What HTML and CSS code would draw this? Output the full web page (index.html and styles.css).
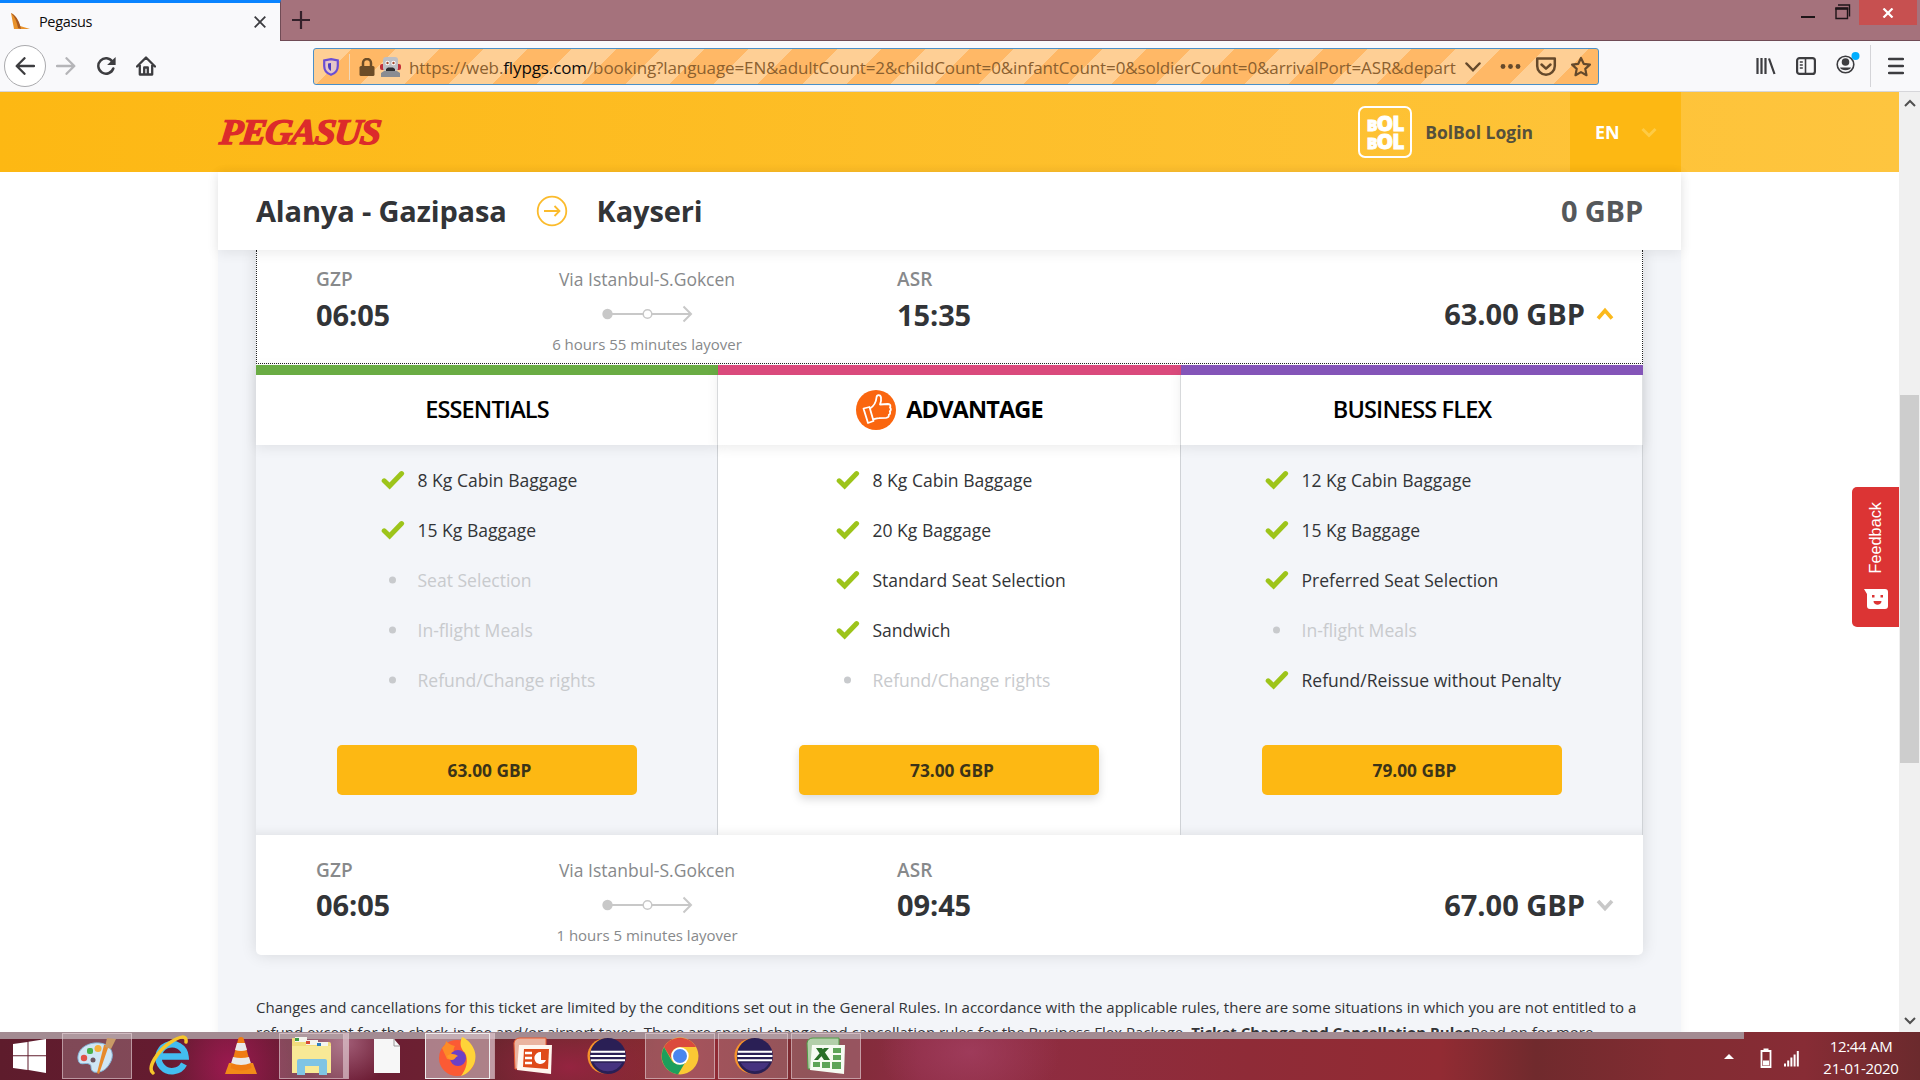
FILE: index.html
```html
<!DOCTYPE html>
<html lang="en">
<head>
<meta charset="utf-8">
<title>Pegasus</title>
<link rel="stylesheet" href="styles.css">
</head>
<body>
<svg class="defs" width="0" height="0">
  <defs>
    <symbol id="check" viewBox="0 0 24 20"><path d="M3.2 10.800 8.600 16 20.600 3.600" fill="none" stroke="#9dc41a" stroke-width="5" stroke-linecap="round" stroke-linejoin="miter"/></symbol>
    <symbol id="dot" viewBox="0 0 24 20"><circle cx="11.500" cy="10" r="3.500" fill="#c8cacd"/></symbol>
    <symbol id="route" viewBox="0 0 92 18"><path d="M5 9H89M81.500 1.500 89 9l-7.500 7.500" fill="none" stroke="#c8c8c8" stroke-width="2"/><circle cx="5.500" cy="9" r="5.200" fill="#c8c8c8"/><circle cx="45.500" cy="9" r="4.300" fill="#fff" stroke="#c8c8c8" stroke-width="1.500"/></symbol>
    <symbol id="eclipse" viewBox="0 0 42 40"><circle cx="20" cy="20" r="18.500" fill="#f7932a"/><circle cx="23" cy="20" r="19" fill="#2a1f55"/><path d="M8 27a17 17 0 0 0 30 0z" fill="#46337f"/><path d="M5 15.500h36M4.500 20h37M5 24.500h36" stroke="#fff" stroke-width="2.200"/></symbol>
  </defs>
</svg>
<div class="tabbar">
  <div class="tab">
    <svg class="favicon" width="20" height="18" viewBox="0 0 20 18"><path d="M0 0c5 2 7 8 9 13l10 3H3z" fill="#e8922b"/><path d="M0 0c4 4 6 9 7 15l3 1C9 10 6 3 0 0z" fill="#a95a20"/></svg>
    <span class="tab-title">Pegasus</span>
    <svg class="tab-close" width="12" height="12" viewBox="0 0 12 12"><path d="M.7.7l10.600 10.600M11.300.7.7 11.300" stroke="#3c3c40" stroke-width="1.800"/></svg>
  </div>
  <svg class="plus" width="18" height="18" viewBox="0 0 18 18"><path d="M9 0v18M0 9h18" stroke="#33202a" stroke-width="2.200"/></svg>
  <div class="win">
    <svg width="58" height="25" viewBox="0 0 58 25"><path d="M0 17h14" stroke="#1e1518" stroke-width="2"/><path d="M37 5h11.500v11.500M35 8.500h11.500v10H35z" fill="none" stroke="#1e1518" stroke-width="1.400"/><path d="M34.300 8.500h13" stroke="#1e1518" stroke-width="2.500"/></svg>
    <div class="win-close"><svg width="12" height="10" viewBox="0 0 12 10"><path d="M1.500.5l9 9M10.500.5l-9 9" stroke="#fff" stroke-width="2.200"/></svg></div>
  </div>
</div>
<div class="toolbar">
  <div class="nav">
    <div class="back"><svg width="20" height="18" viewBox="0 0 20 18"><path d="M19 9H2M9.500 1.200 1.700 9l7.800 7.800" fill="none" stroke="#3d3d40" stroke-width="2.300" stroke-linecap="round" stroke-linejoin="round"/></svg></div>
    <svg width="20" height="18" viewBox="0 0 20 18"><path d="M1 9h17M10.500 1.200 18.300 9l-7.800 7.800" fill="none" stroke="#b5b5b8" stroke-width="2.300" stroke-linecap="round" stroke-linejoin="round"/></svg>
    <svg width="20" height="18" viewBox="0 0 20 18"><path d="M17.300 11.500A7.700 7.700 0 1 1 16.500 4.800" fill="none" stroke="#3d3d40" stroke-width="2.500" stroke-linecap="round"/><path d="M19.600 0v8h-8.500z" fill="#3d3d40"/></svg>
    <svg width="20" height="20" viewBox="0 0 20 20"><path d="M1 10.500 10 1.500l9 9M3.800 9v9.500h12.400V9M8.200 18v-6.500h3.600V18" fill="none" stroke="#3d3d40" stroke-width="2.300" stroke-linecap="round" stroke-linejoin="round"/></svg>
  </div>
  <div class="urlbar">
    <svg class="shield" width="16" height="18" viewBox="0 0 16 18"><path d="M8 1.200 14.800 2.500V8c0 4.500-3 7.500-6.800 8.800C4.200 15.500 1.200 12.500 1.200 8V2.500z" fill="#e5c6c9" stroke="#6a4ed4" stroke-width="2.200"/><path d="M8 5v8c-2-1-3-3-3-5V5.500z" fill="#4b3fc0"/></svg>
    <span class="sep"></span>
    <svg class="lock" width="16" height="18" viewBox="0 0 16 18"><rect x=".5" y="8" width="15" height="10" rx="1.500" fill="#6c4c27"/><path d="M4 9V5a4 4 0 0 1 8 0v4" fill="none" stroke="#6c4c27" stroke-width="2.500"/></svg>
    <svg class="robot" width="21" height="20" viewBox="0 0 21 20"><rect x="0" y="7" width="21" height="6" rx="2" fill="#c2303a"/><rect x="3" y="0" width="15" height="14" rx="3" fill="#bdbfc4"/><path d="M1 20v-4l3-2h13l3 2v4z" fill="#8a8c92"/><circle cx="7.500" cy="6" r="2.200" fill="#fff"/><circle cx="13.500" cy="6" r="2.200" fill="#fff"/><circle cx="7.500" cy="6" r="1.200" fill="#a3472c"/><circle cx="13.500" cy="6" r="1.200" fill="#a3472c"/><path d="M6 14v-2l2-1.500h5l2 1.500v2z" fill="#2c2c30"/></svg>
    <span class="url">https://web.<b>flypgs.com</b>/booking?language=EN&amp;adultCount=2&amp;childCount=0&amp;infantCount=0&amp;soldierCount=0&amp;arrivalPort=ASR&amp;depart</span>
    <svg class="urlicons" width="126" height="22" viewBox="0 0 126 22"><g fill="none" stroke="#65492b" stroke-width="2.500"><path d="M1.500 7.500 8 14.300 14.500 7.500" stroke-linecap="round"/><path d="M72.200 2.500h17.600v7.500a8.800 8.800 0 0 1-17.600 0zM76.500 8.500l4.500 4.200 4.500-4.200" stroke-linejoin="round" stroke-linecap="round"/><path d="M116 2l2.700 5.800 6.200.8-4.600 4.300 1.200 6.300-5.500-3.100-5.500 3.100 1.200-6.300-4.600-4.300 6.200-.8z" stroke-width="2.200" stroke-linejoin="round"/></g><g fill="#65492b"><circle cx="38" cy="10.500" r="2.400"/><circle cx="45.500" cy="10.500" r="2.400"/><circle cx="53" cy="10.500" r="2.400"/></g></svg>
  </div>
  <div class="tools">
    <svg width="20" height="18" viewBox="0 0 20 18"><path d="M1.500 1v16M5.500 1v16M9.500 1v16M13 1.500l5.500 15.500" stroke="#3d3d40" stroke-width="2.200"/></svg>
    <svg width="20" height="18" viewBox="0 0 20 18"><rect x="1.100" y="1.100" width="17.800" height="15.800" rx="2.500" fill="none" stroke="#3d3d40" stroke-width="2.200"/><path d="M9.500 1v16M3.800 5h3M3.800 8h3M3.800 11h3" stroke="#3d3d40" stroke-width="1.600"/></svg>
    <svg width="24" height="24" viewBox="0 0 24 24"><circle cx="9.500" cy="13.500" r="8.300" fill="none" stroke="#3d3d40" stroke-width="1.600"/><circle cx="9.500" cy="11" r="3.800" fill="#3d3d40"/><path d="M4 16.500h11c-1 3.500-10 3.500-11 0z" fill="#3d3d40"/><circle cx="19.500" cy="5" r="4" fill="#00aeff"/></svg>
    <span class="tsep"></span>
    <svg width="16" height="18" viewBox="0 0 16 18"><path d="M1 2h14M1 9h14M1 16h14" stroke="#3d3d40" stroke-width="2.300" stroke-linecap="round"/></svg>
  </div>
</div>
<div class="viewport">
  <div class="site">
    <header class="header">
      <div class="logo">PEGASUS</div>
      <div class="login">
        <div class="bolbol"><span><i>B</i>OL</span><span><i>B</i>OL</span></div>
        <span class="login-text">BolBol Login</span>
      </div>
      <div class="lang">EN<svg width="16" height="11" viewBox="0 0 16 11"><path d="M1.500 2 8 8.500 14.500 2" fill="none" stroke="#fecb45" stroke-width="3"/></svg></div>
    </header>
    <main class="panel">
      <div class="route-bar">
        <span>Alanya - Gazipasa</span>
        <svg width="32" height="32" viewBox="0 0 32 32"><circle cx="16" cy="16" r="14.300" fill="none" stroke="#fbbb2c" stroke-width="1.800"/><path d="M8 16h15M18.500 11l5 5-5 5" fill="none" stroke="#fbbb2c" stroke-width="1.800"/></svg>
        <span>Kayseri</span>
        <span class="total">0 GBP</span>
      </div>
      <div class="list">
        <div class="flight focused">
          <div class="point"><small>GZP</small><strong>06:05</strong></div>
          <div class="via"><span>Via Istanbul-S.Gokcen</span><svg width="92" height="18"><use href="#route"/></svg><small>6 hours 55 minutes layover</small></div>
          <div class="point arrive"><small>ASR</small><strong>15:35</strong></div>
          <div class="price">63.00 GBP<svg width="18" height="14" viewBox="0 0 18 14"><path d="M2 11.500 9 3.500l7 8" fill="none" stroke="#fbb91c" stroke-width="3.600"/></svg></div>
        </div>
        <div class="fares">
          <section class="fare essentials">
            <h2>ESSENTIALS</h2>
            <div class="fare-body">
              <ul>
                <li><svg><use href="#check"/></svg>8 Kg Cabin Baggage</li>
                <li><svg><use href="#check"/></svg>15 Kg Baggage</li>
                <li class="off"><svg><use href="#dot"/></svg>Seat Selection</li>
                <li class="off"><svg><use href="#dot"/></svg>In-flight Meals</li>
                <li class="off"><svg><use href="#dot"/></svg>Refund/Change rights</li>
              </ul>
              <div class="buy">63.00 GBP</div>
            </div>
          </section>
          <section class="fare advantage">
            <h2><svg width="40" height="40" viewBox="0 0 40 40"><circle cx="20" cy="20" r="20" fill="#fa660f"/><g fill="none" stroke="#fff" stroke-width="1.800" stroke-linejoin="round"><path d="M7.500 18.500l6-1.500 4 14-5.500 2z"/><path d="M14 18.500c4-2.500 6-5.500 6.500-11 .2-3 4-3.200 4.500 0 .5 3-.3 5-1 7l8-.5c2.500 0 2.800 2 2 3.500 1.300 1.200 1 3-.2 3.800.8 1.500.2 3-1 3.600.3 1.600-.6 2.800-2.800 3l-7 .3c-2.500 0-3.500.5-6 1"/></g></svg><span>ADVANTAGE</span></h2>
            <div class="fare-body">
              <ul>
                <li><svg><use href="#check"/></svg>8 Kg Cabin Baggage</li>
                <li><svg><use href="#check"/></svg>20 Kg Baggage</li>
                <li><svg><use href="#check"/></svg>Standard Seat Selection</li>
                <li><svg><use href="#check"/></svg>Sandwich</li>
                <li class="off"><svg><use href="#dot"/></svg>Refund/Change rights</li>
              </ul>
              <div class="buy">73.00 GBP</div>
            </div>
          </section>
          <section class="fare business">
            <h2>BUSINESS FLEX</h2>
            <div class="fare-body">
              <ul>
                <li><svg><use href="#check"/></svg>12 Kg Cabin Baggage</li>
                <li><svg><use href="#check"/></svg>15 Kg Baggage</li>
                <li><svg><use href="#check"/></svg>Preferred Seat Selection</li>
                <li class="off"><svg><use href="#dot"/></svg>In-flight Meals</li>
                <li><svg><use href="#check"/></svg>Refund/Reissue without Penalty</li>
              </ul>
              <div class="buy">79.00 GBP</div>
            </div>
          </section>
        </div>
        <div class="flight second">
          <div class="point"><small>GZP</small><strong>06:05</strong></div>
          <div class="via"><span>Via Istanbul-S.Gokcen</span><svg width="92" height="18"><use href="#route"/></svg><small>1 hours 5 minutes layover</small></div>
          <div class="point arrive"><small>ASR</small><strong>09:45</strong></div>
          <div class="price">67.00 GBP<svg width="18" height="14" viewBox="0 0 18 14"><path d="M2 3l7 7.500L16 3" fill="none" stroke="#c8c8c8" stroke-width="3.600"/></svg></div>
        </div>
      </div>
      <p class="rules"><span>Changes and cancellations for this ticket are limited by the conditions set out in the General Rules. In accordance with the applicable rules, there are some situations in which you are not entitled to a</span><span>refund except for the check-in fee and/or airport taxes. There are special change and cancellation rules for the Business Flex Package. <b>Ticket Change and Cancellation Rules</b>Read on for more</span></p>
    </main>
    <div class="feedback"><span>Feedback</span><svg width="24" height="20" viewBox="0 0 24 20"><path d="M0 0h21a3 3 0 0 1 3 3v14a3 3 0 0 1-3 3H6a3 3 0 0 1-3-3V5z" fill="#fff"/><path d="M8 6h2.500v2.500H8zM16.500 6H19v2.500h-2.500zM9.500 12h8c0 5-8 5-8 0z" fill="#dc3434"/></svg></div>
  </div>
  <div class="scrollbar">
    <svg width="12" height="8" viewBox="0 0 12 8"><path d="M1 7l5-5 5 5" fill="none" stroke="#505050" stroke-width="2"/></svg>
    <div class="thumb"></div>
    <svg width="12" height="8" viewBox="0 0 12 8"><path d="M1 1l5 5 5-5" fill="none" stroke="#505050" stroke-width="2"/></svg>
  </div>
</div>
<footer class="taskbar">
  <div class="task start"><svg width="33" height="34" viewBox="0 0 33 34"><path d="M0 5 14.500 3v13.300H0zM15.500 2.800 33 0v16.300H15.500zM0 17.300h14.500V31L0 29zM15.500 17.300H33V34l-17.500-3z" fill="#fff"/></svg></div>
  <div class="task open"><svg width="42" height="40" viewBox="0 0 42 40"><path d="M2 23C1 12 13 6 23 7c13 1 16 12 11 20-4 8-11 10-16 9-5-2-1-7-5-8-4-2-10 3-11-5z" fill="#cfe6f5" stroke="#87b9dc"/><circle cx="8" cy="22" r="3.200" fill="#e0524b"/><rect x="11" y="12" width="6" height="6" rx="2" fill="#47b04c"/><circle cx="22" cy="12.500" r="3.500" fill="#f6b03c"/><circle cx="17" cy="24" r="2.500" fill="#6c5560"/><path d="M33 9 23 38l-2-1 7-28z" fill="#e78a2c"/><path d="M31 2l9 1-5 10-6-2z" fill="#c99a66"/></svg></div>
  <div class="task ie"><svg width="42" height="42" viewBox="0 0 42 42"><path d="M36 29a13.500 13.500 0 1 1 1.500-7.500H13" fill="none" stroke="#43bdf0" stroke-width="6.500"/><path d="M5 38C-1 33 9 16 23 7 32 1 39 0 38 7" fill="none" stroke="#f6c62b" stroke-width="3.500" stroke-linecap="round"/></svg></div>
  <div class="task"><svg width="34" height="40" viewBox="0 0 34 40"><path d="M5 27h24l4 11H1z" fill="#f28a18"/><path d="M14.500 2q2.500-2 5 0l8 30q-10 5-21 0z" fill="#f07c12"/><path d="M13 7h8l2 7q-6 2-12 0zM9 21q8 2 16 0l1.800 6q-9.600 4-19.600 0z" fill="#e9e9e9"/></svg></div>
  <div class="task open stacked"><svg width="42" height="40" viewBox="0 0 42 40"><path d="M1 2h13l2 4h22a2 2 0 0 1 2 2v29H1z" fill="#f2dc7c"/><path d="M4 1h12v5H4zM15 4h12v5H15zM26 6h11v4H26z" fill="#f4f4ee"/><path d="M4 2h4v3H4z" fill="#3f9b45"/><path d="M15 5h4v3h-4z" fill="#d84b36"/><path d="M26 7h4v3h-4z" fill="#2f7fbd"/><path d="M1 10h39v27H1z" fill="#f8e996"/><path d="M6 39V25q0-2 2-2h26q2 0 2 2v14h-8v-9H14v9z" fill="#7fc4e4"/></svg></div>
  <div class="task"><svg width="26" height="34" viewBox="0 0 26 34"><path d="M0 0h20l6 7v27H0z" fill="#f7f7f7"/><path d="M20 0v7h6" fill="none" stroke="#999"/></svg></div>
  <div class="task open active stacked"><svg width="40" height="40" viewBox="0 0 40 40"><circle cx="19" cy="22" r="18" fill="#fb5a34"/><path d="M4 12C7 9 8 7 8 5c3 3 5 4 9 5-3 5-1 8 4 8-3 7-12 5-12 5z" fill="#fd8b27"/><path d="M24 1c6 2 16 12 13 24-1 6-7 13-14 15 5-6 8-16 4-23-4-4-6-9-3-16z" fill="#ffd338"/><circle cx="20" cy="22" r="8" fill="#6c40c8"/><path d="M9 20c4-3 8-2 11 0-3 1-3 4-6 4s-4-2-5-4z" fill="#ff9a28"/></svg></div>
  <div class="task"><svg width="40" height="38" viewBox="0 0 40 38"><path d="M1 6q1-5 6-5h26v30L2 32z" fill="#eab4a0" stroke="#e9582c"/><path d="M6 8h33l-1 29-34-4z" fill="#fff6ef"/><path d="M11 12h25l-1 20-25-2z" fill="#df4a19"/><path d="M12 16h7M12 21h7M12 26h7" stroke="#fff" stroke-width="2.500"/><path d="M28 15a6 6 0 1 0 5 8h-5z" fill="#fff"/></svg></div>
  <div class="task"><svg width="42" height="38"><use href="#eclipse"/></svg></div>
  <div class="task open chrome"><svg width="38" height="38" viewBox="0 0 38 38"><circle cx="19" cy="19" r="18.500" fill="#fbc934"/><path d="M3 10a18.500 18.500 0 0 1 32 0H19a9 9 0 0 0-8 13z" fill="#db4a3d"/><path d="M3 10a18.500 18.500 0 0 0 14 27.400l8-13.400a9 9 0 0 1-14 0z" fill="#1d9f5c"/><circle cx="19" cy="19" r="8.700" fill="#fff"/><circle cx="19" cy="19" r="7" fill="#4a86ee"/></svg></div>
  <div class="task open"><svg width="42" height="38"><use href="#eclipse"/></svg></div>
  <div class="task open"><svg width="40" height="38" viewBox="0 0 40 38"><path d="M1 6q1-5 6-5h26v30L2 32z" fill="#b2cfa9" stroke="#4f9c45"/><path d="M6 8h33l-1 29-34-4z" fill="#f6fbf2"/><path d="M27 11h8v5h-8zM27 18h8v5h-8zM16 25h8v6h-8zM26 25h9v7h-9zM7 25h7v5H7z" fill="#5da457"/><path d="M10 11h6l8 12h-6zM23 11 12 23H8l10-12z" fill="#296f27"/></svg></div>
  <div class="strip"></div>
  <div class="tray">
    <svg width="76" height="22" viewBox="0 0 76 22"><path d="M0 12h10L5 7z" fill="#fff"/><path d="M37.500 4h9v16h-9z" fill="none" stroke="#fff" stroke-width="1.800"/><path d="M39 13.500h6v5h-6zM39.500 1.500h5V4h-5z" fill="#fff"/><path d="M61 19.500v-3M64.200 19.500v-6M67.400 19.500v-9M70.600 19.500v-12M73.800 19.500V4" stroke="#fff" stroke-width="2"/></svg>
    <div class="clock"><span>12:44 AM</span><span>21-01-2020</span></div>
  </div>
</footer>
</body>
</html>
```
FILE: styles.css
```css
* { box-sizing: border-box; }
body { margin: 0; width: 1920px; height: 1080px; overflow: hidden; display: flex; flex-direction: column; background: #fff; font-family: "Open Sans", "Noto Sans", sans-serif; color: #323437; }
.defs { position: absolute; }
svg { flex: none; display: block; }
span, strong, small { white-space: nowrap; }

.tabbar { height: 41px; flex: none; display: flex; background: #a5727c; border-bottom: 1px solid #704b55; }
.tab { width: 281px; height: 41px; display: flex; align-items: center; padding: 0 14px 1px 11px; background: #f9f9fb; border-top: 3px solid #0a84ff; border-right: 1px solid #704b55; }
.tab-title { margin-left: 8px; flex: 1; font-size: 14.5px; letter-spacing: -.35px; color: #0c0c0d; }
.plus { margin: 11px 0 0 11px; }
.win { margin-left: auto; display: flex; padding-right: 3px; }
.win-close { width: 58px; height: 25px; display: flex; align-items: center; justify-content: center; background: #c75050; }

.toolbar { height: 51px; flex: none; display: flex; background: #f9f9fb; border-bottom: 1px solid #d6d6da; }
.nav { width: 313px; display: flex; align-items: center; padding-left: 4px; gap: 20px; }
.back { width: 42px; height: 42px; margin: 0 -10px 0 0; border: 1px solid #aaaaad; border-radius: 50%; display: flex; align-items: center; justify-content: center; background: #fff; }
.urlbar { width: 1286px; height: 37px; margin-top: 7px; border: 1px solid #4a90c8; border-radius: 3px; display: flex; align-items: center; padding-left: 9px; background: repeating-linear-gradient(135deg, #fecf95 0 26.200px, #ffb866 26.200px 57.400px, #fecf95 57.400px 62.500px); }
.sep { width: 1px; height: 26px; margin-left: 10px; background: #eed8bd; }
.lock { margin-left: 9px; }
.robot { margin-left: 5px; }
.url { width: 1048px; margin-left: 8px; padding-top: 2px; font-size: 17px; letter-spacing: -.11px; color: #8b602f; }
.url b { font-weight: 400; color: #0c0c0d; }
.urlicons { margin-left: 8px; }
.tools { margin-left: 157px; display: flex; align-items: center; gap: 20px; }
.tools svg:nth-child(3) { margin-bottom: 7px; }
.tsep { width: 1px; height: 42px; margin: 0 -3px 0 -10px; background: #d4d4d8; }

.viewport { height: 940px; flex: none; display: flex; }
.site { width: 1899px; flex: none; position: relative; display: flex; flex-direction: column; align-items: center; overflow: hidden; background: #fff; }
.header { width: 1899px; height: 80px; flex: none; display: flex; align-items: center; padding: 0 218px; background: linear-gradient(90deg, #fdb813, #fec53f); }
.logo { font-family: "Liberation Serif", serif; font-style: italic; font-weight: 700; font-size: 36px; letter-spacing: -1.5px; line-height: 80px; color: #dc2b2b; -webkit-text-stroke: 1.4px #dc2b2b; transform-origin: 0 50%; transform: translateX(2px) scaleX(1.055) skewX(-6deg); }
.login { margin-left: auto; display: flex; align-items: center; gap: 13px; }
.bolbol { width: 54px; height: 52px; border: 2px solid #fff; border-radius: 7px; display: flex; flex-direction: column; align-items: center; justify-content: center; font-weight: 800; font-size: 21px; line-height: 18px; letter-spacing: -1px; color: #fff; -webkit-text-stroke: .8px #fff; }
.bolbol span { height: 18px; }
.bolbol i { font-style: normal; font-size: 16px; }
.login-text { font-size: 17.500px; font-weight: 700; color: #55503c; }
.lang { width: 111px; height: 80px; margin-left: 37px; padding-left: 25px; display: flex; align-items: center; gap: 21px; background: #fdb813; font-weight: 700; font-size: 18px; color: #fff; }

.panel { width: 1463px; flex: 1; background: #f3f5f9; box-shadow: 0 0 10px rgba(0,0,0,.06); }
.route-bar { height: 78px; padding: 0 38px 2px; display: flex; align-items: center; gap: 30px; position: relative; background: #fff; box-shadow: 0 3px 12px rgba(0,0,0,.08); font-size: 29px; font-weight: 700; letter-spacing: -.15px; }
.route-bar svg { margin: 2px -1px 0; }
.total { margin-left: auto; color: #55585b; }
.list { width: 1387px; margin: 0 0 0 38px; background: #fff; border-radius: 0 0 5px 5px; box-shadow: 0 0 16px rgba(0,0,0,.12); }
.flight { height: 120px; display: flex; padding: 20px 29px 0 60px; }
.focused { height: 114px; padding: 14px 28px 0 59px; border: 1px dotted #222; border-top: 0; }
.point { width: 200px; display: flex; flex-direction: column; }
.point small { font-size: 19px; line-height: 30px; font-weight: 600; letter-spacing: .1px; color: #87898b; }
.point strong { font-size: 29px; line-height: 40px; letter-spacing: -.1px; }
.focused strong { margin-top: 1px; }
.via { width: 260px; margin-left: 1px; display: flex; flex-direction: column; align-items: center; color: #87898b; }
.via span { font-size: 17.5px; line-height: 30px; }
.via svg { margin: 11px 0 0 1px; }
.via small { font-size: 15px; line-height: 24px; margin-top: 9px; }
.arrive { margin-left: 120px; }
.price { margin-left: auto; padding-top: 28px; display: flex; align-items: center; gap: 11px; height: 70px; font-size: 29px; font-weight: 700; }
.price svg { margin-top: 2px; }
.fares { margin-top: 1px; height: 470px; display: grid; grid-template-columns: 462px 463px 462px; }
.fare { display: flex; flex-direction: column; border-right: 1px solid #cfd2d6; }
.fare h2 { margin: 0 -1px 0 0; padding-bottom: 3px; height: 80px; flex: none; display: flex; align-items: center; justify-content: center; gap: 10px; border-top: 10px solid #6aac44; position: relative; background: #fff; box-shadow: 0 3px 12px rgba(0,0,0,.08); font-size: 23.5px; font-weight: 600; letter-spacing: -.85px; color: #000; }
.fare h2::after { content: ""; position: absolute; right: 0; top: 0; width: 1px; height: 70px; background: #dfe1e3; }
.advantage h2 { border-top-color: #da4a7c; font-weight: 700; }
.advantage h2 svg { margin-top: 3px; }
.business h2 { border-top-color: #8455b8; }
.fare-body { flex: 1; background: #f3f5f9; box-shadow: inset 0 -10px 10px -8px rgba(0,0,0,.08); }
.advantage .fare-body { background: #fff; }
.fare ul { margin: 0; padding: 10px 0 0 125px; list-style: none; }
.advantage ul { padding-left: 118px; }
.business ul { padding-left: 84px; }
.fare li { height: 50px; display: flex; align-items: center; gap: 12.500px; white-space: nowrap; font-size: 17.55px; }
.fare li svg { width: 24px; height: 20px; }
.fare li.off { color: #c8cacd; }
.buy { width: 300px; height: 50px; margin: 40px auto 0; padding-left: 6px; display: flex; align-items: center; justify-content: center; border-radius: 5px; background: #fdb813; font-size: 17.300px; font-weight: 700; color: #3b3318; }
.advantage .buy { box-shadow: 0 4px 10px rgba(0,0,0,.15); }
.rules { margin: 40px 0 0 38px; font-size: 15px; line-height: 25px; }
.rules span { display: block; }
.feedback { position: absolute; right: 0; top: 395px; width: 47px; height: 140px; border-radius: 5px 0 0 5px; background: #dc3434; color: #fff; display: flex; flex-direction: column; align-items: center; justify-content: space-between; padding: 15px 0 18px; font: 16.300px "Liberation Sans", sans-serif; }
.feedback span { writing-mode: vertical-rl; transform: rotate(180deg); }
.scrollbar { width: 21px; background: #f0f0f0; display: flex; flex-direction: column; align-items: center; padding: 7px 0; }
.thumb { width: 19px; height: 368px; margin: 288px 0 auto; background: #cdcdcd; }

.taskbar { height: 48px; flex: none; position: relative; display: flex; background: radial-gradient(ellipse 90px 50px at 570px 35px, rgba(166,33,73,.7), transparent), radial-gradient(ellipse 60px 70px at 230px 35px, rgba(165,25,85,.85), transparent), radial-gradient(ellipse 50px 45px at 345px 10px, rgba(175,110,135,.8), transparent), radial-gradient(ellipse 90px 60px at 970px 20px, rgba(165,65,100,.7), transparent), linear-gradient(90deg, #5e1c2c, #6c1b35 18%, #6c2b2b 30%, #952a35 36%, #792b31 42%, #8e2d45 48%, #8f2b37 65%, #922b33 75%, #702a2d 80%, #822c32 87%, #872c35 94%, #6b2a2d); }
.task { width: 70px; height: 46px; margin: 1px 3px 0 0; display: flex; align-items: center; justify-content: center; position: relative; z-index: 1; border: 1px solid transparent; }
.start { width: 59px; }
.ie { width: 68px; }
.open { background: rgba(210,190,195,.28); border-color: rgba(235,215,220,.55); }
.active { background: rgba(225,205,210,.55); border-color: #eee; }
.stacked { width: 65px; margin-right: 8px; box-shadow: 4px 0 0 rgba(200,170,180,.4), 5px 0 0 rgba(240,220,225,.6); }
.chrome { margin-left: 1px; }
.strip { position: absolute; left: 0; top: 0; width: 1744px; height: 7px; background: #a38b92; }
.tray { margin-left: auto; display: flex; align-items: center; padding-right: 20px; gap: 22px; }
.tray svg { margin-top: 4px; }
.clock { display: flex; flex-direction: column; align-items: center; width: 78px; margin-top: 2px; font-size: 15px; line-height: 22px; letter-spacing: -.3px; color: #fff; }
```
